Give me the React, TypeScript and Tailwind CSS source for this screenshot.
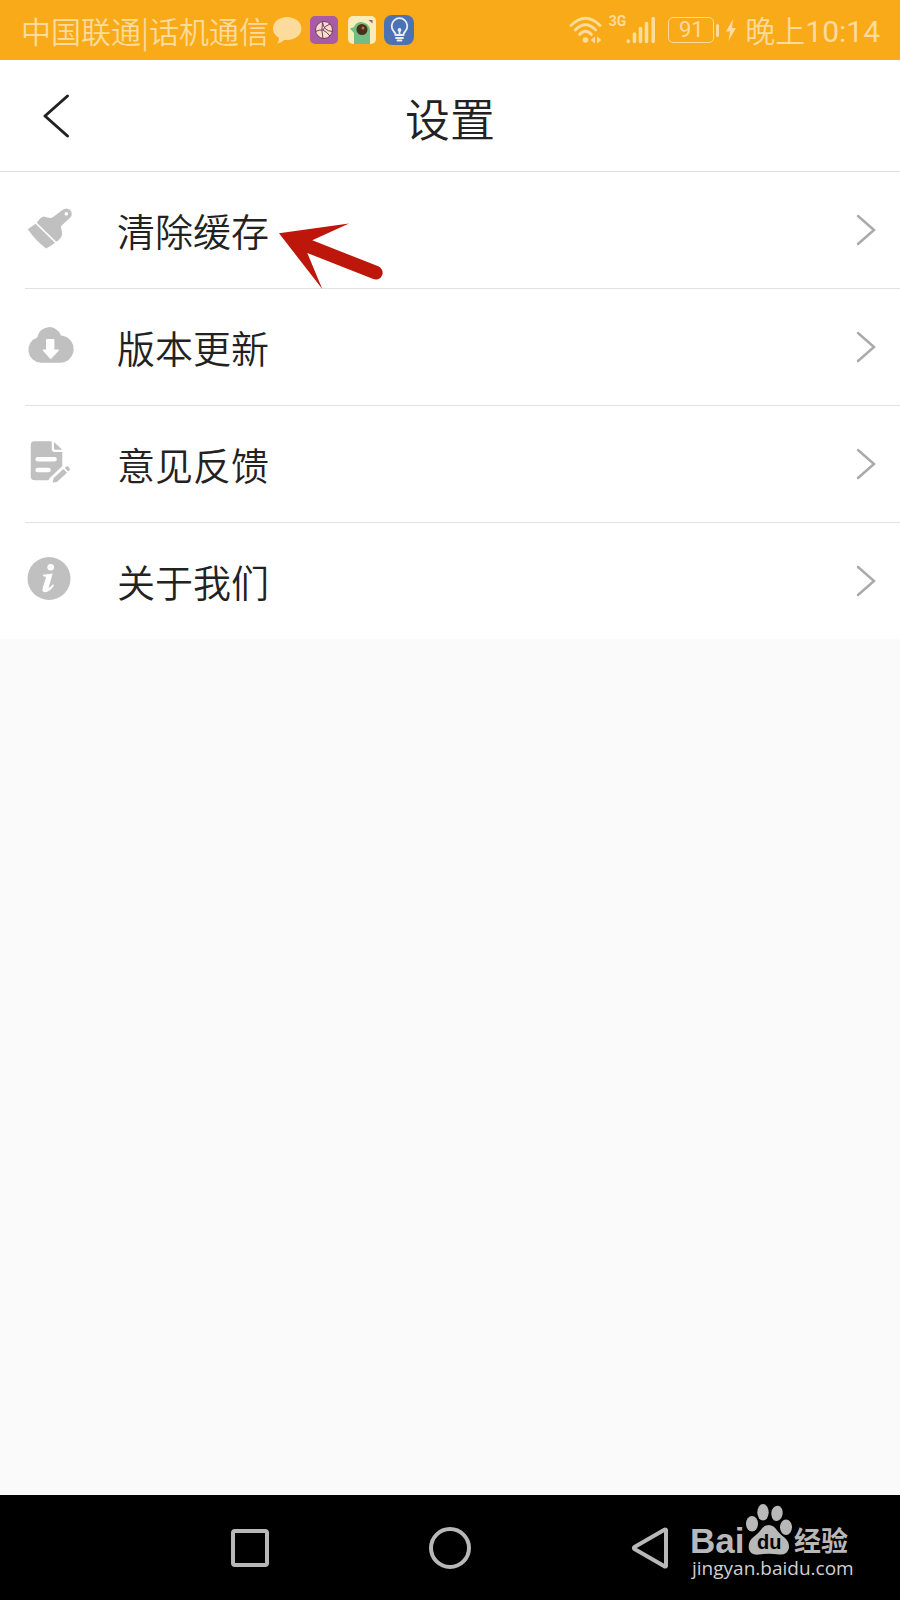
import React from 'react'

function BrushIcon() {
  return (
    <svg viewBox="0 0 44 44" className="size-11 overflow-visible" aria-hidden="true">
      <path fill="#c0c0c0" d="M-.3 21.300 7.500 15.800 27 34.800Q22.500 38.500 18 40.400Q8 33 -.3 21.300Z" />
      <path
        fill="#c0c0c0"
        fillRule="evenodd"
        d="M8.800 14.800Q12.500 9.200 16 8.600Q20 10.200 24 9.800L34.500 2Q38.500-1 42.200 2Q45.200 6 42.400 9.500L32.800 18.200Q34 22.500 34.200 26.500Q32.500 31.500 28.200 33.800ZM38.300 4A1.800 1.800 0 1 0 38.310 4Z"
      />
    </svg>
  )
}

function CloudIcon() {
  return (
    <svg viewBox="0 0 44 44" className="size-11 overflow-visible" aria-hidden="true">
      <path
        fill="#c0c0c0"
        d="M13 37.700A13 13 0 0 1 9.200 12.400A12.300 12.300 0 0 1 33 10.500A13.600 13.600 0 0 1 31 37.700Z"
      />
      <path
        fill="#fff"
        d="M18.800 14h6.800q.8 0 .8.800V24.500h4q1 .3.300 1.200L23.500 33.600q-.8.700-1.600 0L15 25.700q-.7-.9.300-1.200H18V14.800q0-.8.800-.8Z"
      />
    </svg>
  )
}

function NoteIcon() {
  return (
    <svg viewBox="0 0 44 44" className="size-11 overflow-visible" aria-hidden="true">
      <path
        fill="#c0c0c0"
        d="M6.700-.7H23.700V6.500Q23.700 10 27 10H34.300V24L21.500 36.200 20.500 38.300H6.700Q2.700 38.300 2.700 34.300V3.300Q2.700-.7 6.700-.7Z"
      />
      <path fill="#c0c0c0" d="M26 0 34.300 7.800H27.500Q26 7.800 26 6.300Z" />
      <path stroke="#fff" strokeWidth="4.600" strokeLinecap="round" d="M9.700 17.300H26.500M9.700 28H20.500" />
      <path
        fill="#c0c0c0"
        d="M24.500 40.700 25.700 36 35.500 27 39 30.700 29.200 39.700ZM36.800 25.900 38.600 24.300Q39.400 23.900 40.100 24.600L41.700 26.400Q42.200 27.200 41.500 28L40.300 29.500Z"
      />
    </svg>
  )
}

function InfoIcon() {
  return (
    <svg viewBox="0 0 44 44" className="size-11 overflow-visible" aria-hidden="true">
      <circle cx="21" cy="19.500" r="21.500" fill="#c0c0c0" />
      <circle cx="22.700" cy="8.300" r="3.300" fill="#fff" />
      <path
        fill="#fff"
        d="M15 15.800 24.700 14.500 20.500 29Q22.500 28.500 25 25.300L26 26Q22.500 33.300 16.500 33.300Q13.700 32.500 14.600 29.500L18 18.200Q17.500 17.200 15 17.200Z"
      />
    </svg>
  )
}

function PointerArrow() {
  return (
    <svg
      viewBox="0 0 104 66"
      className="pointer-events-none absolute left-full top-3 ml-2.5 h-[66px] w-[104px]"
      aria-hidden="true"
    >
      <path fill="#bd170c" d="M0 10.300 70 .5 33.300 17.300 99.300 43.300A6.800 6.800 0 0 1 94.300 56L28.300 30 43.300 66Z" />
    </svg>
  )
}

const items = [
  { label: '清除缓存', icon: <BrushIcon />, marked: true },
  { label: '版本更新', icon: <CloudIcon /> },
  { label: '意见反馈', icon: <NoteIcon /> },
  { label: '关于我们', icon: <InfoIcon /> }
]

function AppBadges() {
  return (
    <div className="flex items-center">
      <svg viewBox="0 0 30 30" className="size-[30px]" aria-hidden="true">
        <path
          fill="#fddb9c"
          d="M15 2C7 2 1 7 1 13.500C1 17.500 3.500 20.800 7 22.800Q7 26 5.200 28.800Q10 27.500 12.500 24.800C22 26 29.500 20.500 29.500 13.500C29.500 7 23 2 15 2Z"
        />
      </svg>
      <svg viewBox="0 0 28 28" className="ml-2 size-7" aria-hidden="true">
        <rect width="28" height="28" rx="5" fill="#a85ca6" />
        <circle cx="14" cy="14" r="8.500" fill="#fbdcca" stroke="#6f3e63" />
        <path fill="none" stroke="#6f3e63" d="M12.500 6Q11 14 13 22.500M5.500 15.500q4-2 7.500-1.500M12.500 6q1 9 10 9.500M20 8q-6 2-7 6M13 14q4 2 7 6" />
      </svg>
      <svg viewBox="0 0 28 28" className="ml-[10px] size-7" aria-hidden="true">
        <rect width="28" height="28" rx="5" fill="#f9ebba" />
        <path fill="#72bd84" d="M2 12.500 6 11Q8 6 13.500 6Q21.500 7 22 14V28H6V17Z" />
        <circle cx="14" cy="13.500" r="5.500" fill="#4d2e19" />
        <circle cx="15" cy="12" r="1.500" fill="#a47857" />
        <path fill="#8a5a92" d="M20.500 4h4v3.500z" />
      </svg>
      <svg viewBox="0 0 30 30" className="ml-2 size-[30px]" aria-hidden="true">
        <rect width="30" height="30" rx="8" fill="#4c72b4" />
        <g fill="none" stroke="#e8edf2" strokeWidth="1.800" strokeLinecap="round">
          <path d="M11.500 20Q11.500 18 9.500 16A7.800 7.800 0 1 1 21.500 16Q19.500 18 19.500 20ZM12 23h7M13.500 25.500h4M15.500 20v-4" />
          <circle cx="15.500" cy="15" r="1" />
        </g>
      </svg>
    </div>
  )
}

function WifiIcon() {
  return (
    <svg viewBox="0 0 34 28" className="h-7 w-[34px]" aria-hidden="true">
      <g fill="none" stroke="#fddb9c" strokeWidth="2.800" strokeLinecap="round">
        <path d="M2 9.500Q16.500-5 31 9.500" />
        <path d="M6.200 14Q16.500 3.500 26.800 14" />
        <path d="M10.500 18.500Q16.500 12 22.500 18.500" />
      </g>
      <circle cx="16.500" cy="24" r="2.800" fill="#fddb9c" />
      <path fill="#fddb9c" d="M26 20.500v7L21.500 24ZM28 20.500v7l4.500-3.500Z" />
    </svg>
  )
}

function SignalIcon() {
  return (
    <svg viewBox="0 0 30 28" className="h-7 w-[30px]" aria-hidden="true">
      <g stroke="#fddb9c" strokeWidth="3.600" strokeLinecap="round">
        <path d="M2.200 25v.5M8.500 18v7.500M14.500 12.500v13M20.500 7.500v18M27.200 2.500v23" />
      </g>
    </svg>
  )
}

function StatusBar() {
  return (
    <div className="flex h-[60px] items-center justify-between bg-[#f8aa18] pl-[21px] pr-5 text-[30px] font-[350] leading-none text-[#fddb9c]">
      <div className="flex items-center gap-[3px]">
        <span className="whitespace-nowrap">中国联通|话机通信</span>
        <AppBadges />
      </div>
      <div className="flex items-center">
        <WifiIcon />
        <span className="ml-[6px] self-start font-[Roboto,sans-serif] text-sm font-bold leading-none">3G</span>
        <SignalIcon />
        <span className="ml-3 flex h-[26px] w-[46px] items-center justify-center rounded-[5px] border border-[#fddb9c] font-[Roboto,sans-serif] text-[22px] font-normal">
          91
        </span>
        <span className="ml-[2px] h-[13px] w-[3px] rounded-sm bg-[#fddb9c]" />
        <svg viewBox="0 0 12 24" className="ml-[6px] h-6 w-3" aria-hidden="true">
          <path fill="#fddb9c" d="M8 1 1 13.500H5L3.500 23 11 10H7Z" />
        </svg>
        <span className="ml-2 whitespace-nowrap">
          晚上<span className="font-[Roboto,sans-serif] font-normal">10:14</span>
        </span>
      </div>
    </div>
  )
}

function Watermark() {
  return (
    <svg
      viewBox="0 0 170 80"
      className="pointer-events-none absolute right-10 top-[5px] h-20 w-[170px]"
      role="img"
      aria-label="Baidu 经验"
    >
      <g fill="#b8b8b8">
        <text x="0" y="53" className="font-['Liberation_Sans',sans-serif] text-[35px] font-bold">
          Bai
        </text>
        <ellipse cx="62" cy="23.700" rx="6" ry="7.700" />
        <ellipse cx="73" cy="12.300" rx="5.700" ry="8.300" />
        <ellipse cx="87" cy="13.300" rx="5.700" ry="7.700" transform="rotate(8 87 13.300)" />
        <ellipse cx="96" cy="27.300" rx="6" ry="7.700" />
        <path d="M78.500 25Q84 25 87.500 31Q91 35 95 38Q99.500 42 99 48Q97 55.500 89 54.500Q79 53 69 54.500Q60 55.500 58.800 48.500Q58 41 63.500 37Q67 34.500 70 31Q73.500 25 78.500 25Z" />
        <text x="104" y="51" className="font-['Noto_Sans_CJK_SC',sans-serif] text-[27px] font-bold">
          经验
        </text>
      </g>
      <text x="67" y="49" fill="#000" className="font-['Liberation_Sans',sans-serif] text-[20px] font-bold">
        du
      </text>
      <text x="2" y="75" fill="#d0d0d0" className="font-['Open_Sans',sans-serif] text-[19px]">
        jingyan.baidu.com
      </text>
    </svg>
  )
}

const navClass = 'flex items-center justify-center'

function NavBar() {
  return (
    <nav className="relative h-[105px] bg-black">
      <div className="mx-auto grid h-full w-2/3 grid-cols-3">
        <button type="button" aria-label="最近任务" className={navClass}>
          <span className="size-[38px] rounded-[4px] border-4 border-[#b8b8b8]" />
        </button>
        <button type="button" aria-label="主页" className={navClass}>
          <span className="size-[42px] rounded-full border-4 border-[#b8b8b8]" />
        </button>
        <button type="button" aria-label="返回" className={navClass}>
          <svg viewBox="0 0 38 42" className="h-[42px] w-[38px]" aria-hidden="true">
            <path
              fill="none"
              stroke="#b8b8b8"
              strokeWidth="4"
              strokeLinejoin="round"
              d="M35 3V39Q34.500 40 33 39L3.500 22Q2.500 21 3.500 20L33 3Q34.500 2 35 3Z"
            />
          </svg>
        </button>
      </div>
      <Watermark />
    </nav>
  )
}

export default function App() {
  return (
    <div className="flex min-h-screen flex-col bg-[#fafafa] font-['Noto_Sans_CJK_SC',sans-serif] text-[#222]">
      <StatusBar />
      <header className="grid h-28 grid-cols-[1fr_auto_1fr] items-center border-b border-[#dedede] bg-white">
        <button type="button" aria-label="返回" className="ml-[42px] justify-self-start">
          <svg viewBox="0 0 28 44" className="h-11 w-7" aria-hidden="true">
            <path
              fill="none"
              stroke="#222"
              strokeWidth="3"
              strokeLinecap="round"
              strokeLinejoin="round"
              d="M25.500 2 3 22 25.500 42"
            />
          </svg>
        </button>
        <h1 className="pt-1 text-[45px] font-[350] leading-none">设置</h1>
      </header>

      <main className="flex-1">
        <ul className="bg-white">
          {items.map((item) => (
            <li key={item.label} className="group">
              <a href="#" className="flex items-center pl-[25px]">
                <span className="box-content flex h-[116px] flex-1 items-center border-b border-[#e2e2e2] pl-[3px] pr-6 group-last:border-b-0">
                  {item.icon}
                  <span className="relative ml-[45px] text-[38px] font-[350] leading-none">
                    {item.label}
                    {item.marked && <PointerArrow />}
                  </span>
                  <svg viewBox="0 0 20 32" className="ml-auto h-8 w-5" aria-hidden="true">
                    <path fill="none" stroke="#aaa" strokeWidth="2.500" strokeLinecap="round" d="M2 2 18 16 2 30" />
                  </svg>
                </span>
              </a>
            </li>
          ))}
        </ul>
      </main>
      <NavBar />
    </div>
  )
}
